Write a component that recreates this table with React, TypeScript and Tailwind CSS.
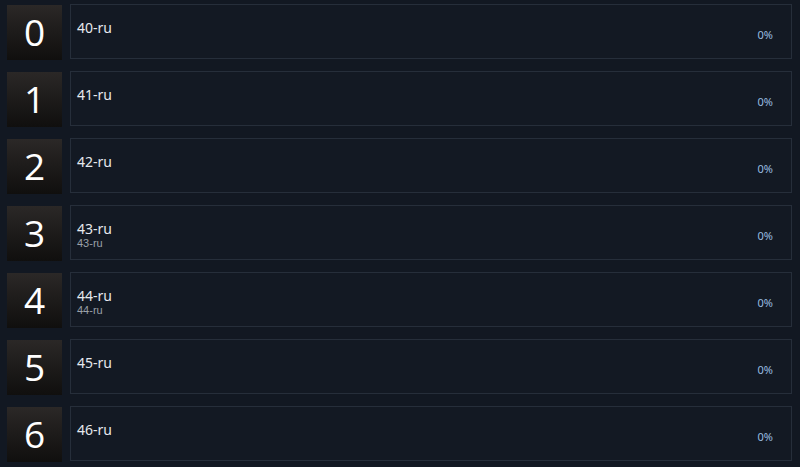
const rows = [
  { n: 0, title: "40-ru" },
  { n: 1, title: "41-ru" },
  { n: 2, title: "42-ru" },
  { n: 3, title: "43-ru", sub: "43-ru" },
  { n: 4, title: "44-ru", sub: "44-ru" },
  { n: 5, title: "45-ru" },
  { n: 6, title: "46-ru" },
];

export default function App() {
  return (
    <div className="w-[800px] h-[467px] overflow-hidden bg-[#121822] pt-[4px] pl-[7px] pr-[8px] font-['Open_Sans',sans-serif]">
      <div className="flex flex-col gap-[12px]">
        {rows.map((r) => (
          <div key={r.n} className="flex gap-[8px] h-[55px]">
            <div className="mt-[1px] w-[55px] h-[55px] shrink-0 bg-gradient-to-b from-[#2b2827] to-[#100f0e] flex items-center justify-center text-white text-[37px] leading-none pb-[2px]">
              {r.n}
            </div>
            <div className="flex-1 h-[55px] border border-[#262e3a] bg-[#131923] flex justify-between pl-[6px] pr-[18px]">
              <div className="pt-[15px]">
                <div className="text-[14px] leading-[16px] text-[#e6e9ee] font-['Noto_Sans',sans-serif]">{r.title}</div>
                <div className="text-[11px] leading-[13px] text-[#9aa0a8] font-['Liberation_Sans',sans-serif]">{r.sub}</div>
              </div>
              <div className="pt-[23px] text-[11px] leading-[14px] text-[#98bde0] font-['Noto_Sans',sans-serif]">0%</div>
            </div>
          </div>
        ))}
      </div>
    </div>
  );
}
